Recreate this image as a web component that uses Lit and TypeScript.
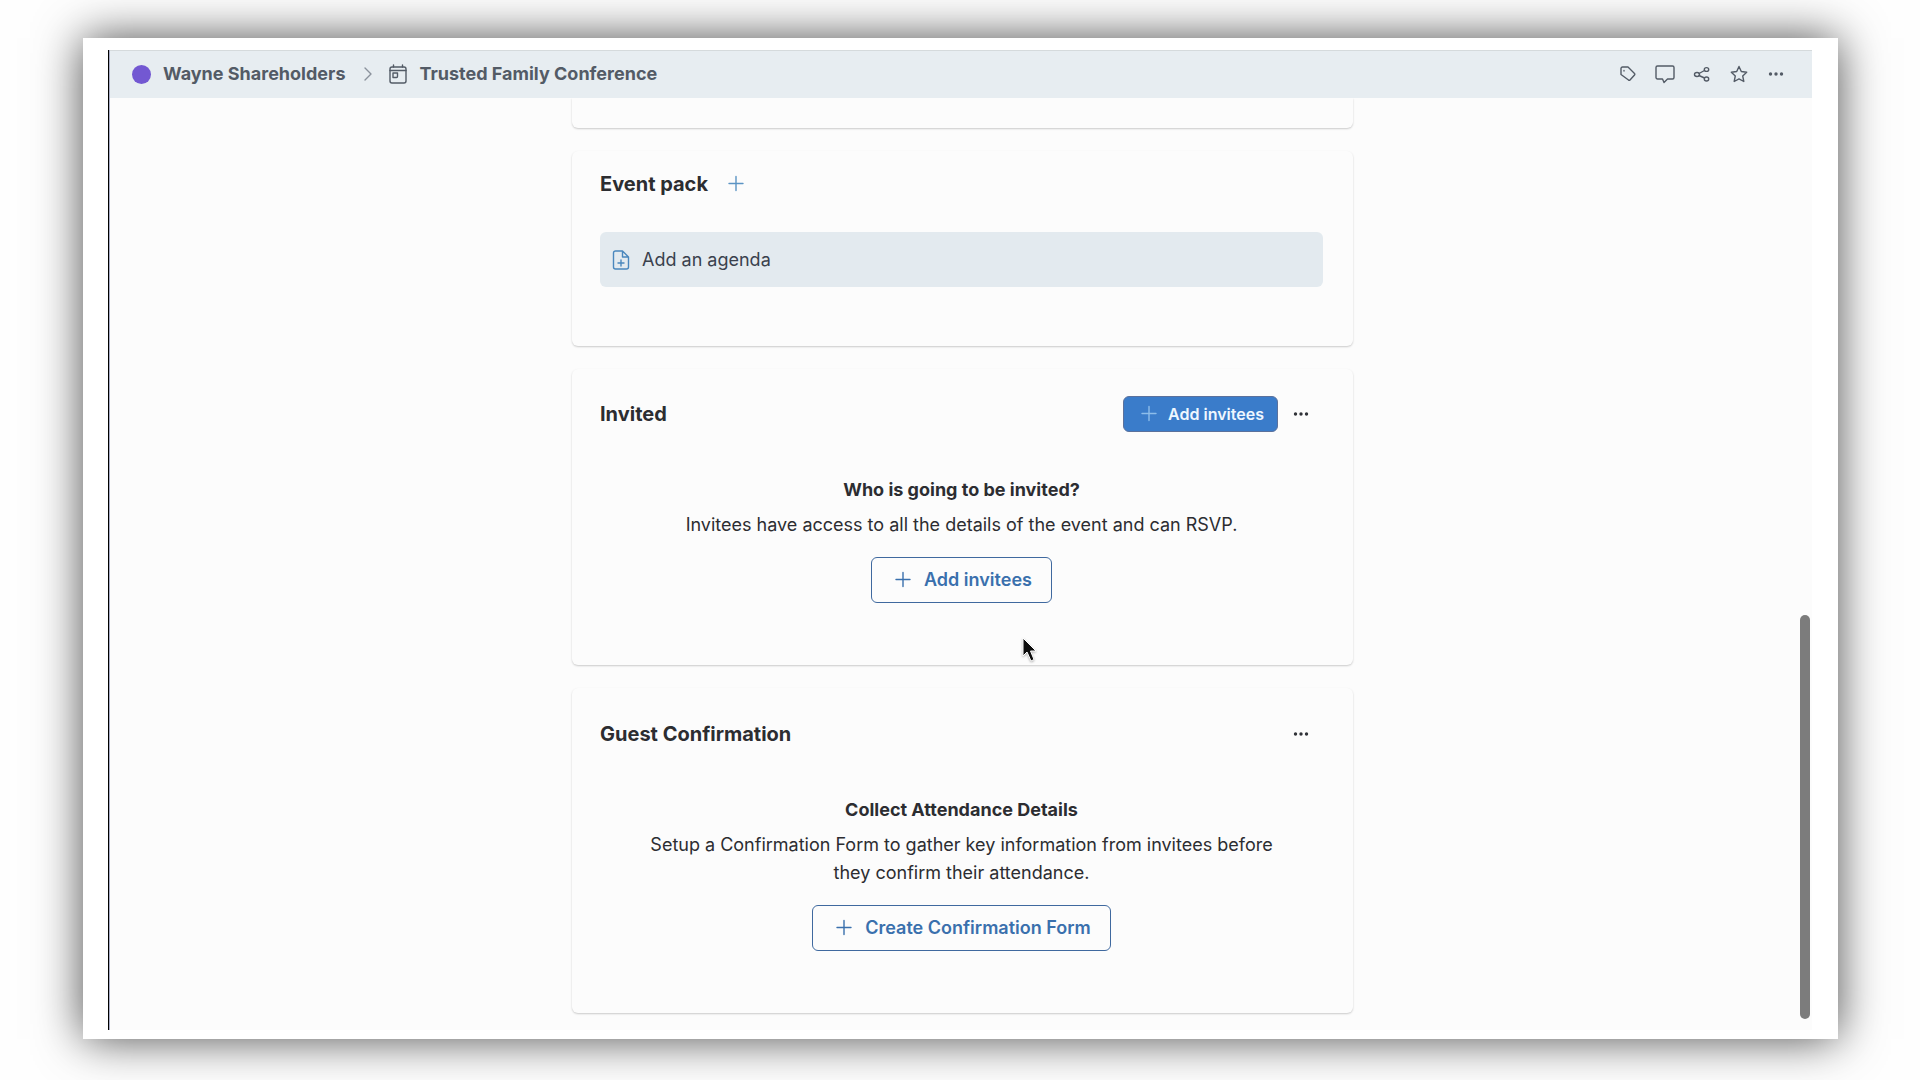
import { LitElement, html, svg, css } from "lit";
import { customElement, property } from "lit/decorators.js";

const shapes: Record<string, unknown> = {
  calendar: svg`<rect x="2" y="3" width="16" height="16" rx="2"/><path d="M2 6.500h16M5.500 1v2M14.500 1v2M5 9h4.500v3.500a1 1 0 0 1-1 1H5z"/>`,
  chevron: svg`<path d="M6 4l6 6-6 6"/>`,
  tag: svg`<path d="M3 4.500a1.500 1.500 0 0 1 1.500-1.500h5.500l6.500 6.500a1 1 0 0 1 0 1.500l-4.500 5a1 1 0 0 1-1.500 0L3 10.500z"/><path d="M6 6.500v.5"/>`,
  comment: svg`<path d="M2.500 2h15A1.500 1.500 0 0 1 19 3.500v10a1.500 1.500 0 0 1-1.500 1.500h-5L9 18.500 7.500 15h-5A1.500 1.500 0 0 1 1 13.500v-10A1.500 1.500 0 0 1 2.500 2z"/>`,
  share: svg`<ellipse cx="5" cy="10.500" rx="2.500" ry="2"/><ellipse cx="14.500" cy="5.500" rx="2.200" ry="1.900"/><ellipse cx="14.500" cy="15" rx="2.200" ry="2"/><path d="M7 9.500l5.500-3M7 11.500l5.500 2.500"/>`,
  star: svg`<path d="M10 2.500l2.300 5 5.400.7-4 3.700 1.100 5.600L10 14.900l-4.800 2.600 1.100-5.600-4-3.700 5.400-.7z"/>`,
  dots: svg`<g fill="currentColor" stroke="none"><circle cx="4.500" cy="10" r="1.700"/><circle cx="10" cy="10" r="1.700"/><circle cx="15.500" cy="10" r="1.700"/></g>`,
  plus: svg`<path d="M3 9.500h14M10 2.500v14"/>`,
  file: svg`<path d="M11.500 1H4.500A2 2 0 0 0 2.500 3v14a2 2 0 0 0 2 2h11a2 2 0 0 0 2-2V7zM11.500 1v6h6M10 10v6M7 13h6"/>`,
};

@customElement("ui-icon")
export class UiIcon extends LitElement {
  @property() name = "plus";
  static styles = css`
    :host { display: inline-flex; flex: none; width: 20px; height: 20px; }
    svg { width: 100%; height: 100%; fill: none; stroke: currentColor; stroke-width: 1.4; stroke-linejoin: round; stroke-linecap: round; }
  `;
  render() {
    return html`<svg viewBox="0 0 20 20" aria-hidden="true">${shapes[this.name]}</svg>`;
  }
}

@customElement("app-root")
export class AppRoot extends LitElement {
  static styles = css`
    :host {
      display: flex; min-height: 100vh; box-sizing: border-box;
      padding: 38px 82px 41px 83px; background: #fefefe;
      font-family: Inter, "Liberation Sans", sans-serif; font-size: 18px; line-height: 28px; color: #2c2d31;
    }
    * { box-sizing: border-box; }
    h2, h3, p, ol { margin: 0; padding: 0; }
    button { font: inherit; color: inherit; background: none; border: 0; padding: 0; margin: 0; display: inline-flex; align-items: center; justify-content: center; cursor: pointer; }
    .frame { flex: 1; display: flex; padding: 12px 26px 9px 25px; background: #fff; box-shadow: 0 0 44px rgba(0, 0, 0, 0.7); }
    .window { flex: 1; display: flex; flex-direction: column; position: relative; min-width: 0; border-left: 1px solid #000; background: #fcfcfc; box-shadow: inset 1px 0 #a9adc6; }
    .bar { display: flex; align-items: center; justify-content: space-between; height: 48px; margin-left: 1px; padding: 0 26px 1px 22px; background: #e7edf1; border-top: 1px solid #d5dadc; color: #535b66; }
    .crumbs { display: flex; align-items: center; list-style: none; font-weight: 700; }
    .crumbs li { display: flex; align-items: center; }
    .crumbs a { color: inherit; text-decoration: none; }
    .dot { width: 19px; height: 19px; border-radius: 50%; background: #7358d2; margin-right: 12px; }
    .crumbs .sep { margin: 0 9px 0 14px; color: #8a929c; }
    .event { gap: 11px; }
    .actions { display: flex; gap: 17px; }
    .actions button { width: 20px; height: 20px; }
    .content { flex: 1; display: flex; flex-direction: column; align-items: center; gap: 23px; padding: 0 20px 0 24px; }
    .card { width: 100%; max-width: 781px; padding: 0 30px 0 28px; border-radius: 6px; background: #fcfcfc; box-shadow: 0 1px 2px rgba(0, 0, 0, 0.2); }
    .previous { height: 30px; border-radius: 0 0 6px 6px; clip-path: inset(0 -4px -4px -4px); }
    .pack { padding-top: 19px; padding-bottom: 59px; }
    .invited { padding-top: 27px; padding-bottom: 62px; }
    .guests { padding-top: 28px; padding-bottom: 62px; }
    .head { display: flex; align-items: center; min-height: 36px; }
    .pack .head { min-height: 28px; gap: 18px; margin-bottom: 34px; }
    h2 { font-size: 20px; line-height: 28px; font-weight: 700; }
    h3 { font-size: 18px; line-height: 28px; font-weight: 700; }
    .tools { display: flex; align-items: center; margin-left: auto; margin-right: 12px; gap: 13px; }
    .tools ui-icon { color: #303238; }
    .blue { color: #5b94c4; }
    .agenda { width: 100%; height: 55px; justify-content: flex-start; gap: 11px; padding: 0 11px; border-radius: 6px; background: #e3eaef; color: #3a414d; }
    .agenda ui-icon { color: #4a87bd; }
    .tools .primary { height: 36px; padding: 0 13px 0 15px; gap: 9px; border-radius: 6px; border: 1px solid #5b719c; background: #3a7cca; color: #eef7ff; font-size: 16px; font-weight: 600; }
    .tools .primary ui-icon { color: #8dbdea; }
    .empty { display: flex; flex-direction: column; align-items: center; gap: 7px; padding: 44px 40px 0; text-align: center; }
    .outline { height: 46px; margin-top: 11px; padding: 0 19px 0 21px; gap: 11px; border: 1px solid #3f699f; border-radius: 6px; color: #3a70ad; font-weight: 600; }
    .thumb { position: absolute; right: 2px; bottom: 11px; width: 10px; height: 404px; border-radius: 5px; background: #7c7c7c; }
    .cursor { position: absolute; left: 913px; top: 587px; width: 16px; height: 26px; filter: drop-shadow(0 1px 1px rgba(0, 0, 0, 0.3)); }
  `;

  render() {
    return html`
      <div class="frame">
        <div class="window">
          <header class="bar">
            <nav aria-label="Breadcrumb">
              <ol class="crumbs">
                <li><span class="dot"></span><a href="#group">Wayne Shareholders</a></li>
                <li class="sep"><ui-icon name="chevron"></ui-icon></li>
                <li class="event"><ui-icon name="calendar"></ui-icon><a href="#event">Trusted Family Conference</a></li>
              </ol>
            </nav>
            <div class="actions">
              ${[["tag", "Tags"], ["comment", "Comments"], ["share", "Share"], ["star", "Favourite"], ["dots", "More"]].map(
                ([icon, label]) => html`<button aria-label=${label}><ui-icon name=${icon}></ui-icon></button>`
              )}
            </div>
          </header>
          <main class="content">
            <div class="card previous"></div>
            <section class="card pack">
              <div class="head">
                <h2>Event pack</h2>
                <button class="blue" aria-label="Add to event pack"><ui-icon name="plus"></ui-icon></button>
              </div>
              <button class="agenda"><ui-icon name="file"></ui-icon>Add an agenda</button>
            </section>
            <section class="card invited">
              <div class="head">
                <h2>Invited</h2>
                <div class="tools">
                  <button class="primary"><ui-icon name="plus"></ui-icon>Add invitees</button>
                  <button aria-label="Invited options"><ui-icon name="dots"></ui-icon></button>
                </div>
              </div>
              <div class="empty">
                <h3>Who is going to be invited?</h3>
                <p>Invitees have access to all the details of the event and can RSVP.</p>
                <button class="outline"><ui-icon name="plus"></ui-icon>Add invitees</button>
              </div>
            </section>
            <section class="card guests">
              <div class="head">
                <h2>Guest Confirmation</h2>
                <div class="tools">
                  <button aria-label="Guest confirmation options"><ui-icon name="dots"></ui-icon></button>
                </div>
              </div>
              <div class="empty">
                <h3>Collect Attendance Details</h3>
                <p>Setup a Confirmation Form to gather key information from invitees before they confirm their attendance.</p>
                <button class="outline"><ui-icon name="plus"></ui-icon>Create Confirmation Form</button>
              </div>
            </section>
          </main>
          <div class="thumb"></div>
          <svg class="cursor" viewBox="0 0 16 26" aria-hidden="true">
            <path d="M1 1v18l4-4 4 9 3-1.500L8.500 14H14z" fill="#0c0c0c" stroke="#fff" stroke-width="1"/>
          </svg>
        </div>
      </div>
    `;
  }
}
